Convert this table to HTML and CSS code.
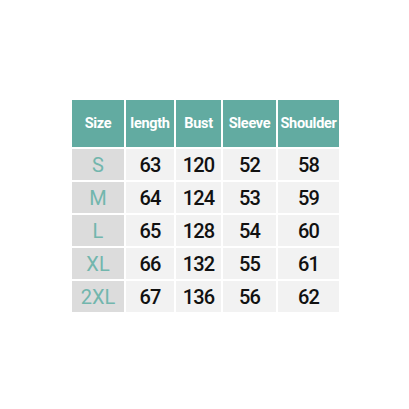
FILE: index.html
```html
<!DOCTYPE html>
<html>
<head>
<meta charset="utf-8">
<link rel="stylesheet" href="styles.css">
</head>
<body>
<div class="page">
  <div class="chart">
    <div class="cell head">Size</div>
    <div class="cell head">length</div>
    <div class="cell head">Bust</div>
    <div class="cell head">Sleeve</div>
    <div class="cell head">Shoulder</div>

    <div class="cell size">S</div>
    <div class="cell num">63</div>
    <div class="cell num">120</div>
    <div class="cell num">52</div>
    <div class="cell num">58</div>

    <div class="cell size">M</div>
    <div class="cell num">64</div>
    <div class="cell num">124</div>
    <div class="cell num">53</div>
    <div class="cell num">59</div>

    <div class="cell size">L</div>
    <div class="cell num">65</div>
    <div class="cell num">128</div>
    <div class="cell num">54</div>
    <div class="cell num">60</div>

    <div class="cell size">XL</div>
    <div class="cell num">66</div>
    <div class="cell num">132</div>
    <div class="cell num">55</div>
    <div class="cell num">61</div>

    <div class="cell size">2XL</div>
    <div class="cell num">67</div>
    <div class="cell num">136</div>
    <div class="cell num">56</div>
    <div class="cell num">62</div>
  </div>
</div>
</body>
</html>
```

FILE: styles.css
```css
html, body {
  margin: 0;
  padding: 0;
  background: #ffffff;
}
.page {
  width: 409px;
  height: 409px;
  padding: 100px 0 0 72px;
  box-sizing: border-box;
}
.chart {
  display: grid;
  grid-template-columns: 52px 48px 45px 53px 61px;
  grid-template-rows: 47px repeat(5, 31px);
  gap: 2px;
  width: max-content;
  font-family: Roboto, "Liberation Sans", sans-serif;
}
.cell {
  display: flex;
  align-items: center;
  justify-content: center;
  white-space: nowrap;
}
.head {
  background: #62aba1;
  color: #ffffff;
  font-size: 14.5px;
  font-weight: 700;
  letter-spacing: -0.3px;
}
.size {
  background: #dcdcdc;
  color: #72b6ad;
  font-size: 20px;
  font-weight: 400;
}
.num {
  background: #f2f2f2;
  color: #111111;
  font-size: 20px;
  font-weight: 500;
  letter-spacing: -0.8px;
}
```
